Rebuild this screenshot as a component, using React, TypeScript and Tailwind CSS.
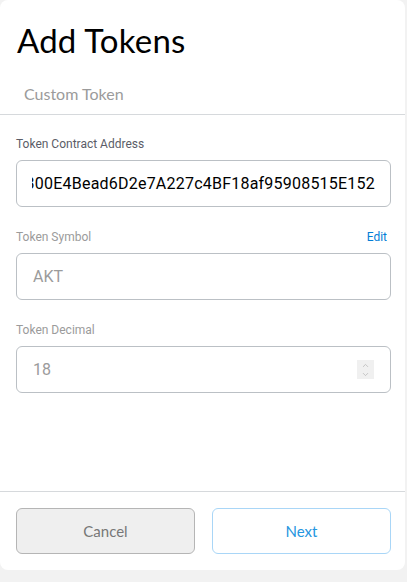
import { ChevronDown, ChevronUp } from "lucide-react";

export default function App() {
	return (
		<div className="w-[407px] h-[582px] bg-[#f2f2f2] font-['Roboto',sans-serif]">
			<div className="w-[405px] h-[570px] bg-white rounded-lg flex flex-col">
				<h1 className="px-[17px] pt-[20px] text-[33px] leading-[40px] text-black font-['Lato',sans-serif] tracking-[0.2px]">
					Add Tokens
				</h1>
				<div className="mt-[23px] border-b border-[#d6d9dc] pb-[7px]">
					<span className="pl-[24px] text-[16px] leading-[20px] text-[#9b9b9b] font-['Lato',sans-serif]">
						Custom Token
					</span>
				</div>

				<div className="px-4 pt-[21px] flex flex-col">
					<label className="text-[12px] leading-[16px] text-[#5b5d67]">Token Contract Address</label>
					<div className="mt-[8px] h-[47px] w-[375px] border border-[#bbc0c5] rounded-[6px] flex items-center px-[15px]">
						<div className="flex-1 overflow-hidden flex justify-end">
							<span className="whitespace-nowrap text-[16px] text-black tracking-[0.22px]">
								0x2c4A1a9D9D0d4F5d300E4Bead6D2e7A227c4BF18af95908515E152
							</span>
						</div>
					</div>

					<div className="mt-[22px] flex justify-between items-center w-[375px]">
						<label className="text-[12px] leading-[16px] text-[#9b9b9b]">Token Symbol</label>
						<span className="text-[12px] leading-[16px] text-[#037dd6] pr-[4px]">Edit</span>
					</div>
					<div className="mt-[8px] h-[47px] w-[375px] border border-[#bbc0c5] rounded-[6px] flex items-center pl-[16px]">
						<span className="text-[16px] text-[#9b9b9b]">AKT</span>
					</div>

					<label className="mt-[22px] text-[12px] leading-[16px] text-[#9b9b9b]">Token Decimal</label>
					<div className="mt-[8px] h-[47px] w-[375px] border border-[#bbc0c5] rounded-[6px] flex items-center justify-between pl-[16px] pr-[16px]">
						<span className="text-[16px] text-[#9b9b9b]">18</span>
						<div className="w-[17px] h-[19px] bg-[#f0f0f0] flex flex-col items-center justify-center text-[#b5b5b5]">
							<ChevronUp size={9} strokeWidth={2} />
							<ChevronDown size={9} strokeWidth={2} />
						</div>
					</div>
				</div>

				<div className="mt-auto border-t border-[#d6d9dc] px-4 pt-[16px] pb-[16px] flex gap-[17px]">
					<button className="shrink-0 w-[179px] h-[46px] bg-[#efefef] border border-[#b5b5b5] rounded-[6px] text-[15px] text-[#777] font-['Lato',sans-serif]">
						Cancel
					</button>
					<button className="shrink-0 w-[179px] h-[46px] bg-white border border-[#a9d6f7] rounded-[6px] text-[15px] text-[#2596e0] font-['Lato',sans-serif]">
						Next
					</button>
				</div>
			</div>
		</div>
	);
}
